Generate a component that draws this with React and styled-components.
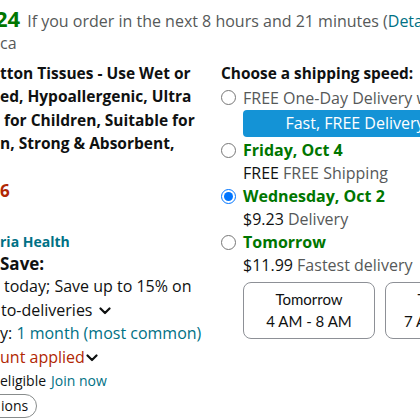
import React from "react";
import styled, { createGlobalStyle } from "styled-components";

const GlobalStyle = createGlobalStyle`
  html, body {
    margin: 0;
    padding: 0;
    background: #fff;
    overflow: hidden;
  }
  body {
    font-family: "Open Sans", "Noto Sans", sans-serif;
    color: #0f1111;
  }
`;

const Page = styled.div`
  width: 420px;
  height: 420px;
  overflow: hidden;
  position: relative;
`;

const PriceRow = styled.div`
  padding-top: 6px;
  line-height: 24px;
  white-space: nowrap;
`;

const BigGreen = styled.span`
  display: inline-block;
  margin-left: -5px;
  font-size: 22px;
  font-weight: 700;
  color: #007600;
`;

const Muted = styled.span`
  color: #565959;
  font-size: ${(p) => p.$size || 16}px;
  margin-left: ${(p) => p.$gap || 0}px;
`;

const SubLine = styled.div`
  font-size: 16px;
  line-height: 20px;
  color: #565959;
  white-space: nowrap;
`;

const Columns = styled.div`
  display: grid;
  grid-template-columns: 221px 1fr;
  margin-top: 8.5px;
`;

const LeftCol = styled.div`
  white-space: nowrap;
  overflow: hidden;
`;

const TitleLine = styled.div`
  font-size: 15.5px;
  font-weight: 700;
  line-height: 23.5px;
  padding-left: ${(p) => p.$indent || 0}px;
`;

const PriceRed = styled.div`
  margin-top: 23.4px;
  font-size: 17px;
  font-weight: 700;
  line-height: 24px;
  color: #b12704;
`;

const BrandLink = styled.div`
  margin-top: 29px;
  font-size: 14px;
  font-weight: 700;
  line-height: 20px;
  color: #007185;
`;

const SaveHead = styled.div`
  font-size: 17px;
  font-weight: 700;
  line-height: 23.5px;
`;

const TextLine = styled.div`
  font-size: ${(p) => p.$size || 16}px;
  line-height: 23.5px;
  padding-left: ${(p) => p.$indent || 0}px;
  display: flex;
  align-items: center;
`;

const Link = styled.span`
  color: #007185;
  margin-left: ${(p) => p.$gap || 0}px;
`;

const Red = styled.span`
  color: #b12704;
`;

const Pill = styled.div`
  display: inline-block;
  margin-top: 1.5px;
  margin-left: -20px;
  padding: 0 8px 0 20px;
  height: 22px;
  line-height: 22px;
  font-size: 14px;
  border: 1px solid #888c8c;
  border-radius: 12px;
`;

const RightCol = styled.div`
  white-space: nowrap;
`;

const Heading = styled.div`
  font-size: 15.4px;
  font-weight: 700;
  line-height: 24px;
`;

const Option = styled.label`
  display: flex;
  align-items: center;
  gap: 7px;
  font-size: 16px;
  line-height: ${(p) => p.$lh || 23}px;
`;

const Radio = styled.input.attrs({ type: "radio", name: "speed" })`
  width: 15px;
  height: 15px;
  margin: 0;
  flex: none;
`;

const Green = styled.span`
  color: #007600;
  font-weight: 700;
`;

const Detail = styled.div`
  font-size: 16px;
  line-height: 23px;
  padding-left: 22px;
`;

const FastBadge = styled.div`
  margin: 0 0 2.5px 22px;
  width: 224px;
  height: 27px;
  line-height: 27px;
  text-align: center;
  font-size: 16px;
  color: #fff;
  background: #1493d6;
  border-radius: 4px;
`;

const Slots = styled.div`
  display: flex;
  gap: 10px;
  margin: 4.5px 0 0 22px;
`;

const Slot = styled.div`
  flex: none;
  width: 130px;
  height: 55px;
  border: 1px solid #8d9096;
  border-radius: 8px;
  display: flex;
  flex-direction: column;
  align-items: center;
  justify-content: center;
  font-family: Lato, "Open Sans", sans-serif;
  font-size: 15px;
  line-height: 22px;
  color: #0f1111;
`;

function Chevron({ gap = 6 }) {
  return (
    <svg
      width="12"
      height="8"
      viewBox="0 0 12 8"
      style={{ marginLeft: gap, flex: "none" }}
    >
      <polyline
        points="1.5,1.5 6,6 10.5,1.5"
        fill="none"
        stroke="#0f1111"
        strokeWidth="2.2"
        strokeLinecap="round"
        strokeLinejoin="round"
      />
    </svg>
  );
}

export default function App() {
  return (
    <Page>
      <GlobalStyle />
      <PriceRow>
        <BigGreen>24</BigGreen>
        <Muted $size={16} $gap={7}>
          If you order in the next 8 hours and 21 minutes (<Link>Details</Link>)
        </Muted>
      </PriceRow>
      <SubLine>ca</SubLine>

      <Columns>
        <LeftCol>
          <TitleLine>tton Tissues - Use Wet or</TitleLine>
          <TitleLine>ed, Hypoallergenic, Ultra</TitleLine>
          <TitleLine $indent={4}>for Children, Suitable for</TitleLine>
          <TitleLine>n, Strong &amp; Absorbent,</TitleLine>

          <PriceRed>6</PriceRed>

          <BrandLink>ria Health</BrandLink>
          <SaveHead>Save:</SaveHead>
          <TextLine $indent={4}>today; Save up to 15% on</TextLine>
          <TextLine $indent={1}>
            to-deliveries
            <Chevron />
          </TextLine>
          <TextLine>
            y:&nbsp;<Link>1 month (most common)</Link>
          </TextLine>
          <TextLine>
            <Red>unt applied</Red>
            <Chevron gap={1} />
          </TextLine>
          <TextLine $size={14}>
            eligible<Link $gap={5}>Join now</Link>
          </TextLine>
          <Pill>ions</Pill>
        </LeftCol>

        <RightCol>
          <Heading>Choose a shipping speed:</Heading>
          <Option $lh={24}>
            <Radio />
            <Muted>FREE One-Day Delivery with Prime</Muted>
          </Option>
          <FastBadge>Fast, FREE Delivery</FastBadge>

          <Option>
            <Radio />
            <Green>Friday, Oct 4</Green>
          </Option>
          <Detail>
            FREE <Muted>FREE Shipping</Muted>
          </Detail>

          <Option>
            <Radio defaultChecked />
            <Green>Wednesday, Oct 2</Green>
          </Option>
          <Detail>
            $9.23 <Muted>Delivery</Muted>
          </Detail>

          <Option>
            <Radio />
            <Green>Tomorrow</Green>
          </Option>
          <Detail>
            $11.99 <Muted>Fastest delivery</Muted>
          </Detail>

          <Slots>
            <Slot>
              <span>Tomorrow</span>
              <span>4 AM - 8 AM</span>
            </Slot>
            <Slot>
              <span>Tomorrow</span>
              <span>7 AM - 11 AM</span>
            </Slot>
          </Slots>
        </RightCol>
      </Columns>
    </Page>
  );
}
